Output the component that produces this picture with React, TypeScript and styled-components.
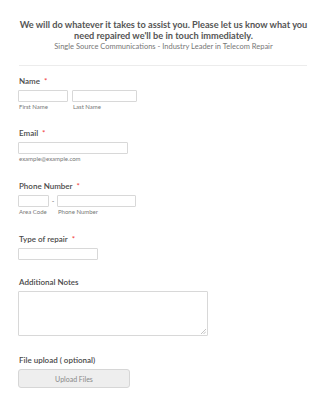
import React from "react";
import styled, { createGlobalStyle } from "styled-components";

const Global = createGlobalStyle`
  html, body { margin: 0; padding: 0; background: #fff; }
  body { font-family: Lato, "Open Sans", sans-serif; color: #555; }
  * { box-sizing: border-box; }
`;

const Page = styled.div`
  width: 325px;
  padding: 19px 18px 0 18px;
`;

const Header = styled.div`
  text-align: center;
  padding: 0 0 13px 1px;
  border-bottom: 1px solid #ececec;
  margin-left: 1px;
`;

const Title = styled.h1`
  margin: 0 -2px;
  font-size: 9.2px;
  line-height: 11px;
  font-weight: 700;
  color: #555;
`;

const Subtitle = styled.div`
  margin-top: 1px;
  font-size: 7.5px;
  line-height: 10px;
  color: #777;
`;

const Field = styled.div<{ $gap: number }>`
  margin-top: ${(p) => p.$gap}px;
`;

const Label = styled.div`
  font-size: 8px;
  line-height: 10px;
  font-weight: 600;
  color: #4a4a4a;
  margin: 0 0 4px 1px;
  span {
    color: #f23a3c;
    margin-left: 4px;
    font-weight: 400;
  }
`;

const Row = styled.div<{ $gap: number }>`
  display: flex;
  align-items: flex-start;
  gap: ${(p) => p.$gap}px;
`;

const Col = styled.div`
  display: flex;
  flex-direction: column;
`;

const Input = styled.div<{ $w: number }>`
  width: ${(p) => p.$w}px;
  height: 12px;
  border: 1px solid #d8d8d8;
  border-radius: 1px;
  background: #fff;
`;

const Sub = styled.div`
  font-size: 6px;
  line-height: 8px;
  color: #777;
  margin: 1px 0 0 1px;
`;

const Dash = styled.div`
  font-size: 7px;
  line-height: 12px;
  color: #777;
  width: 4px;
  text-align: center;
`;

const TextArea = styled.div`
  position: relative;
  width: 190px;
  height: 45px;
  border: 1px solid #d8d8d8;
  border-radius: 1px;
`;

const Grip = styled.svg`
  position: absolute;
  right: 1px;
  bottom: 1px;
`;

const UploadButton = styled.div`
  width: 112px;
  height: 19px;
  border: 1px solid #d6d6d6;
  border-radius: 3px;
  background: #eeeeee;
  color: #888;
  font-size: 7px;
  display: flex;
  align-items: center;
  justify-content: center;
`;

export default function App() {
  return (
    <>
      <Global />
      <Page>
        <Header>
          <Title>
            We will do whatever it takes to assist you. Please let us know what you need repaired we'll be in touch immediately.
          </Title>
          <Subtitle>Single Source Communications - Industry Leader in Telecom Repair</Subtitle>
        </Header>

        <Field $gap={10}>
          <Label>
            Name<span>*</span>
          </Label>
          <Row $gap={4}>
            <Col>
              <Input $w={50} />
              <Sub>First Name</Sub>
            </Col>
            <Col>
              <Input $w={65} />
              <Sub>Last Name</Sub>
            </Col>
          </Row>
        </Field>

        <Field $gap={17}>
          <Label>
            Email<span>*</span>
          </Label>
          <Input $w={110} />
          <Sub>example@example.com</Sub>
        </Field>

        <Field $gap={18}>
          <Label>
            Phone Number<span>*</span>
          </Label>
          <Row $gap={2}>
            <Col>
              <Input $w={31} />
              <Sub>Area Code</Sub>
            </Col>
            <Dash>-</Dash>
            <Col>
              <Input $w={79} />
              <Sub>Phone Number</Sub>
            </Col>
          </Row>
        </Field>

        <Field $gap={18}>
          <Label>
            Type of repair<span>*</span>
          </Label>
          <Input $w={80} />
        </Field>

        <Field $gap={17}>
          <Label>Additional Notes</Label>
          <TextArea>
            <Grip width="5" height="5" viewBox="0 0 5 5">
              <path d="M5 0 L0 5 M5 2.5 L2.5 5" stroke="#aaa" strokeWidth="0.7" />
            </Grip>
          </TextArea>
        </Field>

        <Field $gap={19}>
          <Label>File upload ( optional)</Label>
          <UploadButton>Upload Files</UploadButton>
        </Field>
      </Page>
    </>
  );
}
